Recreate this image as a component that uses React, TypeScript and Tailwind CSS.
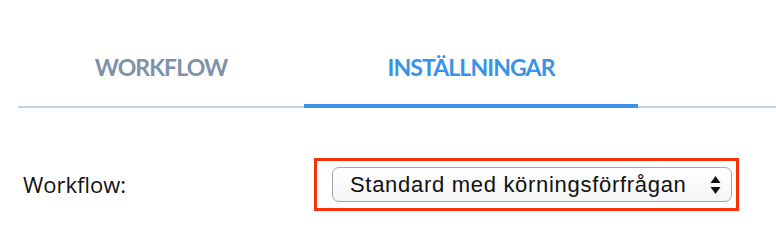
import React from "react";

export default function App() {
  return (
    <div className="w-[776px] h-[242px] bg-white overflow-hidden">
      <div className="ml-[18px] pt-[29px] flex border-b-2 border-[#c6cfdb]">
        <div className="w-[286px] h-[79px] -mb-[2px] flex items-start pt-[24px] justify-center text-[#7d91a9] font-bold text-[23px] leading-[28px] tracking-[-0.9px]" style={{ fontFamily: 'Lato, sans-serif' }}>
          WORKFLOW
        </div>
        <div className="w-[334px] h-[79px] -mb-[2px] border-b-4 border-[#3a93e6] flex items-start pt-[24px] justify-center text-[#3a93e6] font-bold text-[23px] leading-[28px] tracking-[-0.9px]" style={{ fontFamily: 'Lato, sans-serif' }}>
          INSTÄLLNINGAR
        </div>
      </div>
      <div className="flex items-center mt-[50px]">
        <div className="ml-[23px] w-[291px] text-[22px] text-[#111]" style={{ fontFamily: '"Open Sans", sans-serif' }}>
          Workflow:
        </div>
        <div className="w-[425px] h-[53px] border-[3px] border-[#f9320c] flex items-center pl-[15px]">
          <div className="w-[400px] h-[35px] rounded-[7px] border border-[#a6a6a6] bg-gradient-to-b from-white to-[#f4f4f4] flex items-center justify-between pl-[17px] pr-[10px]" style={{ fontFamily: '"Liberation Sans", Arial, sans-serif' }}>
            <span className="text-[22px] text-[#111] tracking-[0.7px]">Standard med körningsförfrågan</span>
            <svg width="11" height="18" viewBox="0 0 11 18">
              <path d="M5.5 0 L10.5 7 L0.5 7 Z" fill="#111" />
              <path d="M5.5 18 L10.5 11 L0.5 11 Z" fill="#111" />
            </svg>
          </div>
        </div>
      </div>
    </div>
  );
}
